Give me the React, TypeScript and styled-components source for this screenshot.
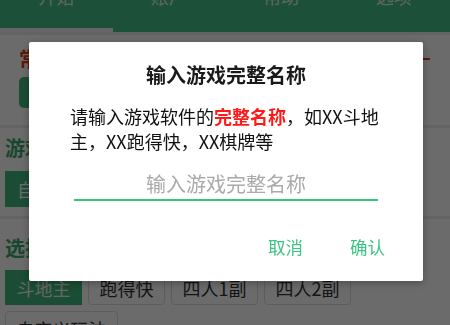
import React from "react";
import styled, { createGlobalStyle } from "styled-components";

const Global = createGlobalStyle`
  html, body { margin: 0; padding: 0; }
  body {
    font-family: "Noto Sans CJK SC", "Noto Sans", sans-serif;
    background: #ffffff;
  }
  * { box-sizing: border-box; }
`;

const Screen = styled.div`
  position: relative;
  width: 450px;
  height: 325px;
  overflow: hidden;
  background: #ebebeb;
  display: flex;
  flex-direction: column;
  gap: 3px;
`;

const TabBar = styled.div`
  display: flex;
  height: 32px;
  flex-shrink: 0;
  background: #43be85;
`;

const Tab = styled.div`
  flex: 1;
  display: flex;
  flex-direction: column;
  align-items: center;
`;

const TabLabel = styled.span`
  margin-top: -13px;
  font-size: 18px;
  line-height: 18px;
  color: rgba(255, 255, 255, 0.85);
`;

const Indicator = styled.div<{ $active?: boolean }>`
  margin-top: auto;
  align-self: stretch;
  height: 4px;
  background: ${(p) => (p.$active ? "#f4f4f4" : "transparent")};
`;

const Section = styled.section<{ $pad: string }>`
  background: #ffffff;
  padding: ${(p) => p.$pad};
  display: flex;
  flex-direction: column;
  flex-shrink: 0;
`;

const TitleRow = styled.div`
  display: flex;
  align-items: center;
  justify-content: space-between;
`;

const SectionTitle = styled.h2<{ $color: string }>`
  margin: 0;
  font-size: 20px;
  line-height: 28px;
  font-weight: 700;
  color: ${(p) => p.$color};
`;

const RedDash = styled.span`
  width: 12px;
  height: 2px;
  background: #e0391c;
`;

const FillButton = styled.div<{ $h: number; $w: number; $mt: number; $radius: number }>`
  margin-top: ${(p) => p.$mt}px;
  width: ${(p) => p.$w}px;
  height: ${(p) => p.$h}px;
  border-radius: ${(p) => p.$radius}px;
  background: #40b77c;
  color: #ffffff;
  font-size: 18px;
  display: flex;
  align-items: center;
  padding: 0 12px;
`;

const ChipWrap = styled.div`
  margin-top: 8px;
  display: flex;
  flex-wrap: wrap;
  gap: 6px;
`;

const Chip = styled.div<{ $active?: boolean }>`
  height: 35px;
  padding: 0 10.5px;
  border: 1px solid ${(p) => (p.$active ? "#40b77c" : "#dedede")};
  border-radius: ${(p) => (p.$active ? "0" : "4px")};
  background: ${(p) => (p.$active ? "#40b77c" : "#ffffff")};
  color: ${(p) => (p.$active ? "#eaf6ef" : "#333333")};
  font-size: 18px;
  display: flex;
  align-items: center;
  white-space: nowrap;
`;

const Overlay = styled.div`
  position: fixed;
  inset: 0;
  background: rgba(0, 0, 0, 0.58);
  display: flex;
  align-items: center;
  justify-content: center;
`;

const Dialog = styled.div`
  width: 394px;
  height: 239px;
  margin-left: 2px;
  margin-top: -2px;
  background: #ffffff;
  border-radius: 2px;
  box-shadow: 0 2px 8px rgba(0, 0, 0, 0.3);
  padding: 19px 41px 0 41px;
  display: flex;
  flex-direction: column;
`;

const DialogTitle = styled.h1`
  margin: 0;
  font-size: 20px;
  line-height: 28px;
  font-weight: 700;
  color: #1a1a1a;
  text-align: center;
`;

const Message = styled.p`
  margin: 15px 0 0 0;
  font-size: 18px;
  line-height: 25px;
  color: #111111;
`;

const Strong = styled.span`
  color: #ff1a1a;
  font-weight: 700;
`;

const NameInput = styled.input`
  margin: 14px 4px 0 4px;
  height: 33px;
  padding: 0;
  border: none;
  border-bottom: 2px solid #3ac57f;
  outline: none;
  background: transparent;
  font-family: "Noto Sans CJK SC", "Noto Sans", sans-serif;
  font-size: 20px;
  text-align: center;
  color: #222222;
  &::placeholder {
    color: #aaaaaa;
  }
`;

const Actions = styled.div`
  margin: 27px -41px 0 0;
  padding-right: 26px;
  display: flex;
  justify-content: flex-end;
  gap: 23px;
`;

const ActionButton = styled.button`
  height: 36px;
  padding: 0 12px;
  border: none;
  background: transparent;
  font-family: "Noto Sans CJK SC", "Noto Sans", sans-serif;
  font-size: 17.5px;
  color: #3cc584;
  cursor: pointer;
`;

const tabs = ["开始", "账户", "帮助", "选项"];
const games = ["斗地主", "跑得快", "四人1副", "四人2副", "自定义玩法"];

export default function App() {
  return (
    <>
      <Global />
      <Screen>
        <TabBar>
          {tabs.map((t, i) => (
            <Tab key={t}>
              <TabLabel>{t}</TabLabel>
              <Indicator $active={i === 0} />
            </Tab>
          ))}
        </TabBar>
        <Section $pad="10px 20px 17px 19px">
          <TitleRow>
            <SectionTitle $color="#e0391c">常用游戏</SectionTitle>
            <RedDash />
          </TitleRow>
          <FillButton $mt={4} $h={31} $w={120} $radius={5}>添加游戏</FillButton>
        </Section>
        <Section $pad="6px 5px 9px 5px">
          <SectionTitle $color="#3aa86a">游戏识别</SectionTitle>
          <FillButton $mt={9} $h={36} $w={140} $radius={0}>自动识别</FillButton>
        </Section>
        <Section $pad="15px 5px 9px 5px">
          <SectionTitle $color="#3aa86a">选择玩法</SectionTitle>
          <ChipWrap>
            {games.map((g, i) => (
              <Chip key={g} $active={i === 0}>{g}</Chip>
            ))}
          </ChipWrap>
        </Section>
        <Overlay>
          <Dialog>
            <DialogTitle>输入游戏完整名称</DialogTitle>
            <Message>
              请输入游戏软件的<Strong>完整名称</Strong>，如XX斗地主，XX跑得快，XX棋牌等
            </Message>
            <NameInput placeholder="输入游戏完整名称" />
            <Actions>
              <ActionButton>取消</ActionButton>
              <ActionButton>确认</ActionButton>
            </Actions>
          </Dialog>
        </Overlay>
      </Screen>
    </>
  );
}
